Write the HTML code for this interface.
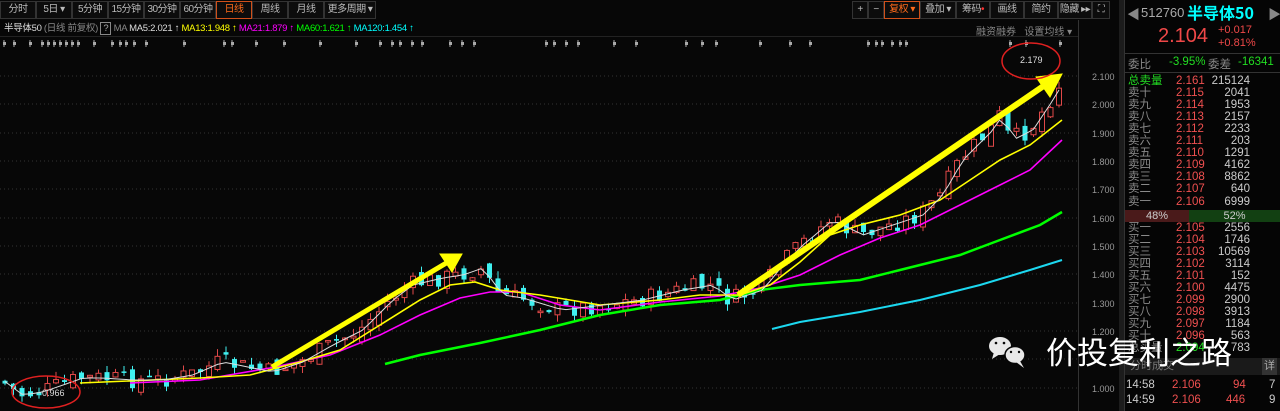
<!DOCTYPE html>
<html><head><meta charset="utf-8"><style>
*{margin:0;padding:0;box-sizing:border-box}
body{width:1280px;height:411px;background:#070707;overflow:hidden;position:relative;font-family:"Liberation Sans","Noto Sans CJK SC",sans-serif;color:#ccc}
.a{position:absolute;white-space:nowrap}
.tb{position:absolute;top:1px;height:18px;border:1px solid #333;font-size:10px;color:#bbb;text-align:center;line-height:16px;background:#0c0c0c;white-space:nowrap;overflow:hidden;letter-spacing:-0.5px}
.ob{position:absolute;left:1128px;font-size:11.5px;line-height:12px;width:150px;height:12px}
.ob span{position:absolute;top:0}
.n{left:0;color:#8a8a8a}.p{left:48px;color:#f05050}.v{right:28px;color:#ccc;text-align:right}
</style></head><body>
<div class="tb" style="left:0;width:36px">分时</div>
<div class="tb" style="left:36px;width:36px">5日 ▾</div>
<div class="tb" style="left:72px;width:36px">5分钟</div>
<div class="tb" style="left:108px;width:36px">15分钟</div>
<div class="tb" style="left:144px;width:36px">30分钟</div>
<div class="tb" style="left:180px;width:36px">60分钟</div>
<div class="tb" style="left:216px;width:36px;color:#ff6a1a;border-color:#d0501a">日线</div>
<div class="tb" style="left:252px;width:36px">周线</div>
<div class="tb" style="left:288px;width:36px">月线</div>
<div class="tb" style="left:324px;width:52px">更多周期 ▾</div>
<div class="tb" style="left:852px;width:16px">+</div>
<div class="tb" style="left:868px;width:16px">−</div>
<div class="tb" style="left:884px;width:36px;color:#ff6a1a;border-color:#d0501a">复权 ▾</div>
<div class="tb" style="left:920px;width:36px">叠加 ▾</div>
<div class="tb" style="left:956px;width:34px">筹码<span style="color:#f33">•</span></div>
<div class="tb" style="left:990px;width:34px">画线</div>
<div class="tb" style="left:1024px;width:34px">简约</div>
<div class="tb" style="left:1058px;width:34px">隐藏 ▸▸</div>
<div class="tb" style="left:1092px;width:18px">⛶</div>
<div class="a" style="left:4px;top:23px;font-size:9.5px;line-height:12px;letter-spacing:-0.3px">
<span style="color:#ddd">半导体50</span> <span style="color:#888">(日线 前复权)</span> <span style="border:1px solid #888;color:#aaa;padding:0 2px">?</span> <span style="color:#888">MA</span> <span style="color:#ddd">MA5:2.021 ↑</span> <span style="color:#ff0">MA13:1.948 ↑</span> <span style="color:#f0f">MA21:1.879 ↑</span> <span style="color:#0f0">MA60:1.621 ↑</span> <span style="color:#0ff">MA120:1.454 ↑</span></div>
<div class="a" style="left:976px;top:23px;font-size:10px;color:#888">融资融券 &nbsp; 设置均线 ▾</div>
<div class="a" style="left:0;top:36px;width:1078px;border-top:1px solid #222"></div>
<svg class="a" style="left:0;top:0" width="1124" height="411">
<g stroke="#333" stroke-dasharray="1 3">
<line x1="0" x2="1078" y1="76" y2="76"/><line x1="0" x2="1078" y1="104" y2="104"/><line x1="0" x2="1078" y1="133" y2="133"/><line x1="0" x2="1078" y1="161" y2="161"/><line x1="0" x2="1078" y1="189" y2="189"/><line x1="0" x2="1078" y1="218" y2="218"/><line x1="0" x2="1078" y1="246" y2="246"/><line x1="0" x2="1078" y1="274" y2="274"/><line x1="0" x2="1078" y1="303" y2="303"/><line x1="0" x2="1078" y1="331" y2="331"/><line x1="0" x2="1078" y1="359" y2="359"/><line x1="0" x2="1078" y1="388" y2="388"/>
</g>
<line x1="1078.5" y1="20" x2="1078.5" y2="411" stroke="#333"/>
<rect x="1119" y="0" width="5" height="411" fill="#1c1c1c"/>
<g font-size="9" fill="#999" font-family="Liberation Sans">
<text x="1092" y="80">2.100</text><text x="1092" y="108">2.000</text><text x="1092" y="137">1.900</text><text x="1092" y="165">1.800</text><text x="1092" y="193">1.700</text><text x="1092" y="222">1.600</text><text x="1092" y="250">1.500</text><text x="1092" y="278">1.400</text><text x="1092" y="307">1.300</text><text x="1092" y="335">1.200</text><text x="1092" y="392">1.000</text>
</g>
<g id="stars" fill="#aaa"></g>
<g id="cd"></g>
<g fill="none">
<polyline stroke="#0f0" stroke-width="2.5" points="385,364 420,355 480,343 540,330 600,315 660,305 720,300 760,290 800,285 860,280 900,270 960,255 1000,240 1040,225 1062,212"/>
<polyline stroke="#1cd8f0" stroke-width="2" points="772,329 800,322 860,312 920,300 980,285 1030,270 1062,260"/>
<polyline stroke="#f0f" stroke-width="1.6" points="130,383 200,380 270,368 330,355 380,335 420,315 460,298 490,292 520,292 560,305 600,310 660,302 720,296 760,288 800,275 840,255 880,238 920,225 960,205 1000,185 1030,170 1062,140"/>
<polyline stroke="#ff0" stroke-width="1.6" points="80,383 200,378 250,375 300,362 340,350 380,325 420,300 450,285 475,282 500,290 540,295 600,305 660,300 700,295 740,295 770,285 800,262 830,235 860,225 900,215 940,200 970,180 1000,160 1030,145 1062,120"/>
<polyline id="ma5" stroke="#ddd" stroke-width="1"/>
</g>
<g fill="#ff0" stroke="#ff0">
<line x1="272" y1="367" x2="448" y2="262" stroke-width="5"/><polygon points="462,254 440,254 452,272"/>
<line x1="738" y1="295" x2="1045" y2="85" stroke-width="6"/><polygon points="1062,74 1036,77 1050,97"/>
</g>
<ellipse cx="46" cy="392" rx="34" ry="16" fill="none" stroke="#e02020" stroke-width="1.5"/>
<ellipse cx="1031" cy="61" rx="29" ry="18" fill="none" stroke="#e02020" stroke-width="1.5"/>
<text x="42" y="396" fill="#ddd" font-size="9">0.966</text>
<text x="1020" y="63" fill="#ddd" font-size="9">2.179</text>
<g fill="#e8e8e8">
<ellipse cx="1000" cy="346" rx="11" ry="9"/><polygon points="994,352 992,359 1000,354"/>
<ellipse cx="1015" cy="355" rx="10" ry="8.5" stroke="#070707" stroke-width="1.5"/><polygon points="1020,361 1024,368 1016,362"/>
<circle cx="996" cy="343" r="1.3" fill="#070707"/><circle cx="1004" cy="343" r="1.3" fill="#070707"/>
<circle cx="1011" cy="352" r="1.2" fill="#070707"/><circle cx="1019" cy="352" r="1.2" fill="#070707"/>
</g>
</svg>
<div class="a" style="left:1046px;top:333px;font-size:31px;color:#fff;font-family:'Noto Sans CJK SC',sans-serif;line-height:36px;z-index:3">价投复利之路</div>
<div class="a" style="left:1124px;top:0;width:156px;height:411px;background:#050505;border-left:1px solid #333"></div>
<div class="a" style="left:1127px;top:4px;font-size:13px;color:#888">◀</div>
<div class="a" style="left:1141px;top:5px;font-size:13px;color:#aaa">512760</div>
<div class="a" style="left:1187px;top:2px;font-size:16px;color:#0ff;font-weight:bold;font-family:'Noto Sans CJK SC',sans-serif;line-height:20px">半导体50</div>
<div class="a" style="left:1268px;top:4px;font-size:13px;color:#888">▶</div>
<div class="a" style="left:1158px;top:25px;font-size:20px;color:#f04848">2.104</div>
<div class="a" style="left:1218px;top:24px;font-size:11px;color:#f04848;line-height:13px">+0.017<br>+0.81%</div>
<div class="a" style="left:1124px;top:53px;width:156px;border-top:1px solid #333"></div>
<div class="a" style="left:1128px;top:56px;font-size:11.5px;color:#888">委比</div>
<div class="a" style="left:1169px;top:56px;font-size:11.5px;color:#2d2">-3.95%</div>
<div class="a" style="left:1208px;top:56px;font-size:11.5px;color:#888">委差</div>
<div class="a" style="left:1238px;top:56px;font-size:11.5px;color:#2d2">-16341</div>
<div class="a" style="left:1124px;top:72px;width:156px;border-top:1px solid #333"></div>
<div id="ob"></div>
<div class="a" style="left:1125px;top:210px;width:64px;height:12px;background:#4a1a1a;font-size:11px;color:#ccc;text-align:center;line-height:12px">48%</div>
<div class="a" style="left:1189px;top:210px;width:91px;height:12px;background:#124012;font-size:11px;color:#ccc;text-align:center;line-height:12px">52%</div>
<div class="a" style="left:1125px;top:358px;width:155px;height:17px;background:#1a1a1a;font-size:11px;color:#777;padding-left:5px;line-height:17px">分时成交<span style="position:absolute;right:3px;background:#333;color:#aaa;padding:0 2px">详</span></div>
<div class="a" style="left:1126px;top:379px;font-size:11.5px;color:#ccc">14:58</div><div class="a" style="left:1172px;top:379px;font-size:11.5px;color:#f05050">2.106</div><div class="a" style="left:1233px;top:379px;font-size:11.5px;color:#f05050">94</div><div class="a" style="left:1269px;top:379px;font-size:11.5px;color:#ccc">7</div>
<div class="a" style="left:1126px;top:394px;font-size:11.5px;color:#ccc">14:59</div><div class="a" style="left:1172px;top:394px;font-size:11.5px;color:#f05050">2.106</div><div class="a" style="left:1226px;top:394px;font-size:11.5px;color:#f05050">446</div><div class="a" style="left:1269px;top:394px;font-size:11.5px;color:#ccc">9</div>
<script>
var rows=[["总卖量","2.161","215124"],["卖十","2.115","2041"],["卖九","2.114","1953"],["卖八","2.113","2157"],["卖七","2.112","2233"],["卖六","2.111","203"],["卖五","2.110","1291"],["卖四","2.109","4162"],["卖三","2.108","8862"],["卖二","2.107","640"],["卖一","2.106","6999"],null,["买一","2.105","2556"],["买二","2.104","1746"],["买三","2.103","10569"],["买四","2.102","3114"],["买五","2.101","152"],["买六","2.100","4475"],["买七","2.099","2900"],["买八","2.098","3913"],["买九","2.097","1184"],["买十","2.096","563"],["总买量","2.094","783"]];
var h="";var ys=[75,87,99,111,123,135,147,159,171,183,196,0,222,234,246,258,270,282,294,306,318,330,342];
rows.forEach(function(r,i){if(!r)return;var nc=i==0?"#2d2":"#8a8a8a";var pc=i==22?"#2d2":"#f05050";
h+='<div class="ob" style="top:'+ys[i]+'px"><span class="n" style="color:'+nc+'">'+r[0]+'</span><span class="p" style="color:'+pc+'">'+r[1]+'</span><span class="v">'+r[2]+'</span></div>';});
document.getElementById("ob").innerHTML=h;
var P=[[0,380],[20,395],[40,392],[60,385],[80,378],[100,378],[130,380],[160,380],[190,375],[220,362],[250,368],[270,372],[300,362],[330,345],[360,330],[390,300],[410,285],[440,278],[460,275],[480,268],[500,295],[520,298],[560,310],[600,305],[640,300],[680,290],[710,285],[730,300],[760,290],[780,265],[800,245],[830,220],[860,235],[890,225],[920,215],[940,195],[960,160],[990,130],[1000,115],[1010,140],[1030,130],[1050,100],[1062,80]];
function f(x){for(var i=1;i<P.length;i++)if(x<=P[i][0]){var a=P[i-1],b=P[i];return a[1]+(b[1]-a[1])*(x-a[0])/(b[0]-a[0]);}return 80;}
var s=7,o="",pts="",prev=f(0);function r(){s=(s*9301+49297)%233280;return s/233280;}
for(var x=5;x<=1062;x+=8.5){var c=f(x)+(r()-0.5)*18;var op=prev+(r()-0.5)*12;var hi=Math.min(c,op)-r()*8,lo=Math.max(c,op)+r()*7;var up=c<op;var col=up?"#e04848":"#40f0f0";
o+='<line x1="'+x+'" x2="'+x+'" y1="'+hi+'" y2="'+lo+'" stroke="'+col+'"/>';
var t=Math.min(c,op),hh=Math.max(Math.abs(c-op),1.5);
o+='<rect x="'+(x-2.5)+'" y="'+t+'" width="5" height="'+hh+'" '+(up?'fill="#070707" stroke="'+col+'"':'fill="'+col+'"')+'/>';
prev=c;pts+=x+","+f(x-3)+" ";}
document.getElementById("cd").innerHTML=o;document.getElementById("ma5").setAttribute("points",pts);
var st="",sx=[4,14,30,42,48,54,60,66,72,78,94,112,120,126,134,146,184,224,232,256,284,320,356,380,392,400,412,422,450,462,474,546,554,566,578,614,636,686,702,716,760,790,810,868,876,882,892,900,906,1010,1026,1060];
sx.forEach(function(x){st+='<rect x="'+(x-1)+'" y="42" width="3" height="3"/><rect x="'+(x-0.5)+'" y="40" width="1" height="7"/>';});document.getElementById("stars").innerHTML=st;
</script>
</body></html>
